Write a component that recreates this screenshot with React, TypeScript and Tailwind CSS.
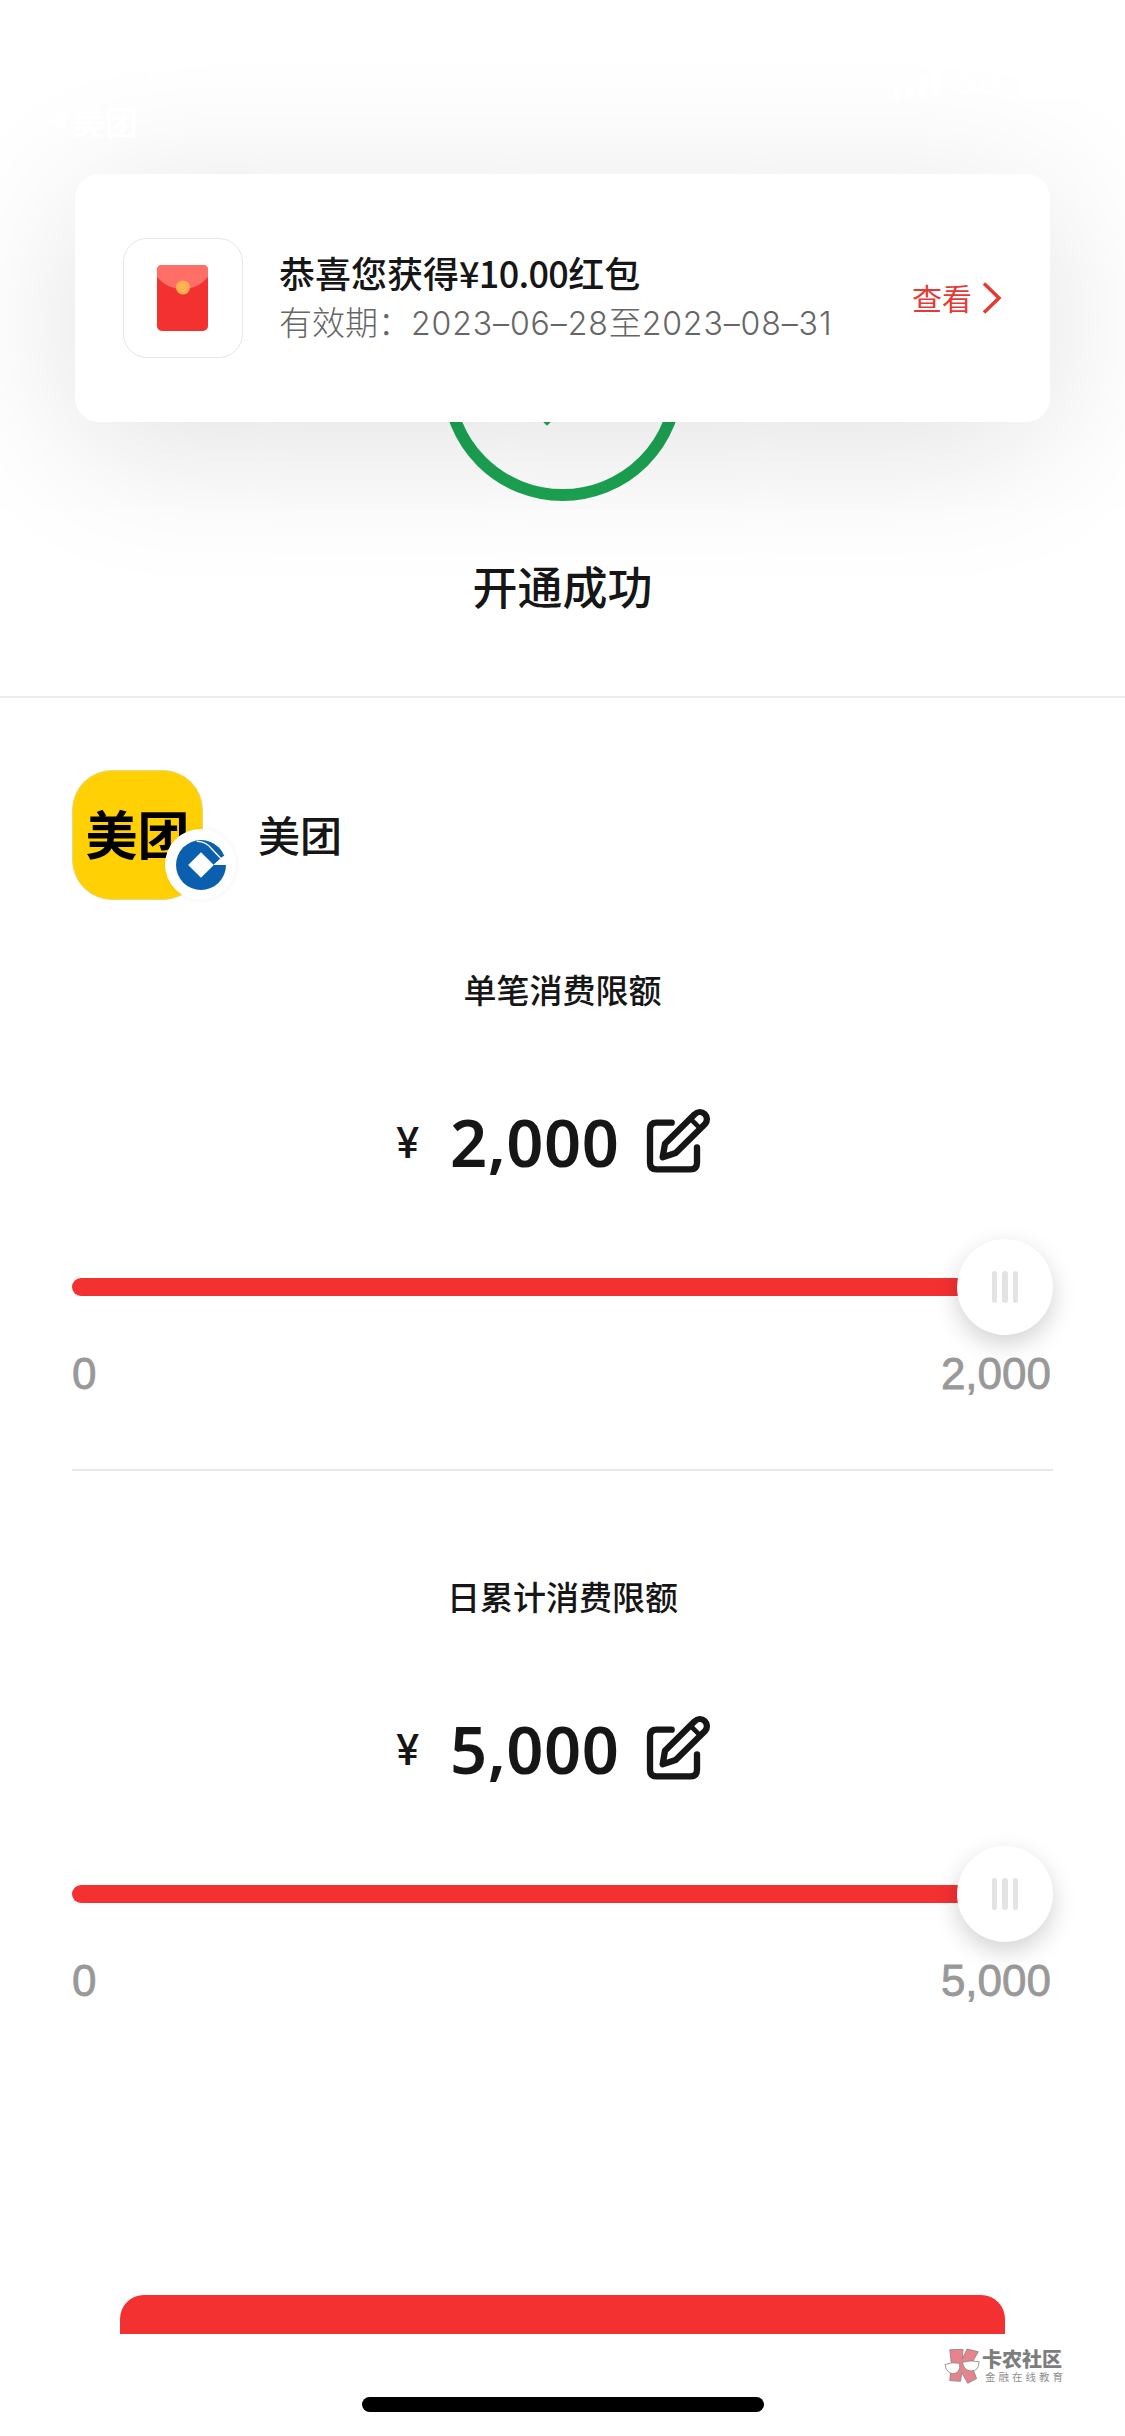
type LimitProps = {
    title: string;
    amount: string;
};

function EditIcon() {
    return (
        <svg
            className="w-[65px] h-[65px]"
            viewBox="800 470 195 195"
            fill="none"
            stroke="#161616"
            strokeWidth={19}
            strokeLinecap="round"
            strokeLinejoin="round"
        >
            <path d="M877 514H832Q812 514 812 534V634Q812 654 832 654H933Q953 654 953 634V588" />
            <path d="M857 577L946 489A20.500 20.500 0 0 1 977 518L889 605L850 618Z" />
            <path d="M934 503L963 532" strokeWidth={14} />
        </svg>
    );
}

function BankBadge() {
    return (
        <svg className="w-[50px] h-[50px]" viewBox="345 269 152 152">
            <circle cx="421" cy="345" r="76" fill="#0a5fae" />
            <path d="M421 306L460 345L421 384L382 345Z" fill="#fff" />
            <path d="M458 345L487 319L500 314V345Z" fill="#fff" />
            <path d="M408 273Q434 272 452 294L482 326" fill="none" stroke="#fff" strokeWidth={4} />
        </svg>
    );
}

function Slider() {
    return (
        <div className="mt-[66px] flex h-24 items-center">
            <div className="h-[18px] flex-1 rounded-l-full bg-[#f33131] -mr-2" />
            <div className="relative flex h-24 w-24 items-center justify-center gap-[5px] rounded-full bg-white shadow-[0_9px_24px_rgba(0,0,0,0.18)]">
                <div className="h-8 w-[5.500px] rounded-full bg-[#e3e3e3]" />
                <div className="h-8 w-[5.500px] rounded-full bg-[#e3e3e3]" />
                <div className="h-8 w-[5.500px] rounded-full bg-[#e3e3e3]" />
            </div>
        </div>
    );
}

function Limit({ title, amount }: LimitProps) {
    return (
        <section>
            <h2 className="-mt-px text-center text-[33px] leading-[48px] font-medium">{title}</h2>
            <div className="mt-[94px] flex h-[66px] items-center pl-[323px]">
                <span className="w-[55px] pt-[4px] pl-px font-['Inter',sans-serif] text-[42px] font-medium">¥</span>
                <span className="w-[196px] pt-[4px] font-['Noto_Sans',sans-serif] text-[65px] leading-[66px] font-semibold tracking-[0.5px]">
                    {amount}
                </span>
                <EditIcon />
            </div>
            <Slider />
            <div className="mt-[15px] flex justify-between pr-[2px] font-['Liberation_Sans',sans-serif] text-[44px] leading-[48px] text-[#999] [-webkit-text-stroke:0.8px_#999]">
                <span>0</span>
                <span>{amount}</span>
            </div>
        </section>
    );
}

function RedPacketBanner() {
    return (
        <div className="absolute top-[174px] left-[75px] flex h-[248px] w-[975px] items-center rounded-3xl bg-white px-12 shadow-[0_24px_150px_rgba(0,0,0,0.12)]">
            <div className="flex h-[120px] w-[120px] items-center justify-center rounded-3xl border border-[#e6e6e6] pr-[2px]">
                <svg className="h-[66px] w-[51px]" viewBox="0 0 51 66">
                    <rect width="51" height="66" rx="5" fill="#f33131" />
                    <path d="M0 12V5Q0 0 5 0H46Q51 0 51 5V12C44 20 36 24 25.500 24S7 20 0 12Z" fill="#ff6f67" />
                    <circle cx="26" cy="22.500" r="7" fill="#ffb24f" />
                </svg>
            </div>
            <div className="ml-9 flex-1 pb-px">
                <p className="text-[36px] leading-[50px] font-medium whitespace-nowrap">
                    恭喜您获得<span className="tracking-[-0.700px]">¥10.00</span>红包
                </p>
                <p className="text-[33px] leading-[48px] font-light whitespace-nowrap text-[#666]">
                    有效期：
                    <span className="font-['Inter',sans-serif] text-[32px] tracking-[0.9px]">2023–06–28</span>至
                    <span className="font-['Inter',sans-serif] text-[32px] tracking-[0.9px]">2023–08–31</span>
                </p>
            </div>
            <div className="flex items-center gap-[10px] text-[30px] text-[#e33a35]">
                <span className="-mt-[2px]">查看</span>
                <svg className="h-8 w-5" viewBox="0 0 20 32" fill="none" stroke="#e33a35" strokeWidth={3.500}>
                    <path d="M2 1.500L17 16L2 30.500" />
                </svg>
            </div>
        </div>
    );
}

function StatusBar() {
    return (
        <div className="absolute top-0 left-0 w-full text-white">
            <div className="flex h-[104px] items-start justify-between pt-[40px] pr-[42px] pl-[84px] font-['Inter',sans-serif]">
                <span className="text-[42px] leading-[48px] font-semibold">17:11</span>
                <div className="mt-[27px] flex items-center gap-4">
                    <div className="flex items-end gap-[5px]">
                        <div className="h-3 w-2 rounded-sm bg-white" />
                        <div className="h-4 w-2 rounded-sm bg-white" />
                        <div className="h-6 w-2 rounded-sm bg-white" />
                        <div className="h-8 w-2 rounded-sm bg-white" />
                    </div>
                    <span className="text-[34px] leading-8 font-semibold">5G</span>
                    <div className="h-8 w-16 rounded-lg bg-white" />
                </div>
            </div>
            <div className="-mt-[7px] flex items-center gap-1 pl-[48px] text-[33px] leading-[48px] font-bold">
                <svg className="h-6 w-5" viewBox="0 0 20 24" fill="#fff">
                    <path d="M18 2V22L2 12Z" />
                </svg>
                <span>美团</span>
            </div>
        </div>
    );
}

function Watermark() {
    return (
        <div className="flex items-center gap-[2px]">
            <svg className="h-9 w-9" viewBox="194 236 106 106" stroke="#8b8383" strokeWidth={2.500} strokeLinejoin="round">
                <path d="M211 241L250 240L248 268L262 239L295 247L274 284L290 326L264 340L246 308L243 334L211 332L216 284Z" fill="#e7838c" />
                <path d="M197 285Q217 276 240 281Q244 310 220 312Q201 309 197 285Z" fill="#fff" />
                <path d="M248 278Q271 271 297 276Q298 303 274 304Q252 302 248 278Z" fill="#fff" />
            </svg>
            <div className="whitespace-nowrap">
                <p className="text-[20px] leading-[22px] font-black text-[#7d7d7d]">卡农社区</p>
                <p className="pl-[3px] text-[10.500px] leading-[14px] tracking-[3px] text-[#8f8f8f]">金融在线教育</p>
            </div>
        </div>
    );
}

function App() {
    return (
        <main className="relative flex h-[2436px] w-[1125px] flex-col overflow-hidden bg-white font-['Noto_Sans_CJK_SC',sans-serif] text-[#161616]">
            {/* Result */}
            <header className="flex h-[698px] flex-col items-center border-b-2 border-[#ececec] pt-[260px]">
                <svg className="h-[241px] w-[241px]" viewBox="0 0 241 241" fill="none" stroke="#1ca353">
                    <circle cx="120.500" cy="120.500" r="114.500" strokeWidth={12} />
                    <path d="M62 115L105 158L180 83" strokeWidth={11} />
                </svg>
                <h1 className="mt-[55px] text-[45px] leading-[60px] font-medium">开通成功</h1>
            </header>

            {/* Merchant and limits */}
            <div className="px-[72px] pt-[72px]">
                <div className="flex items-center">
                    <div className="relative flex h-[130px] w-[131px] items-center justify-center rounded-[40px] border border-[#e8d67a] bg-[#ffd104] pb-[5px]">
                        <span className="text-[52px] leading-[60px] font-bold text-black">美团</span>
                        <div className="absolute top-[58px] left-[92px] flex h-[71px] w-[71px] items-center justify-center rounded-full bg-white shadow-[0_0_6px_rgba(0,0,0,0.06)]">
                            <BankBadge />
                        </div>
                    </div>
                    <span className="-mt-[3px] ml-[55px] text-[42px] leading-[60px] font-medium">美团</span>
                </div>

                <div className="mt-[66px]">
                    <Limit title="单笔消费限额" amount="2,000" />
                    <div className="mt-[71px] mb-[102px] h-[2px] bg-[#e8e8e8]" />
                    <Limit title="日累计消费限额" amount="5,000" />
                </div>
            </div>

            {/* Bottom bar */}
            <footer className="mt-auto flex h-[141px] flex-col items-center">
                <div className="h-[39px] w-[885px] rounded-t-3xl bg-[#f33131]" />
                <div className="mt-[14px] flex w-full justify-end pr-[59px]">
                    <Watermark />
                </div>
                <div className="mt-auto mb-6 h-[15px] w-[402px] rounded-full bg-black" />
            </footer>

            <RedPacketBanner />
            <StatusBar />
        </main>
    );
}

export default App;
